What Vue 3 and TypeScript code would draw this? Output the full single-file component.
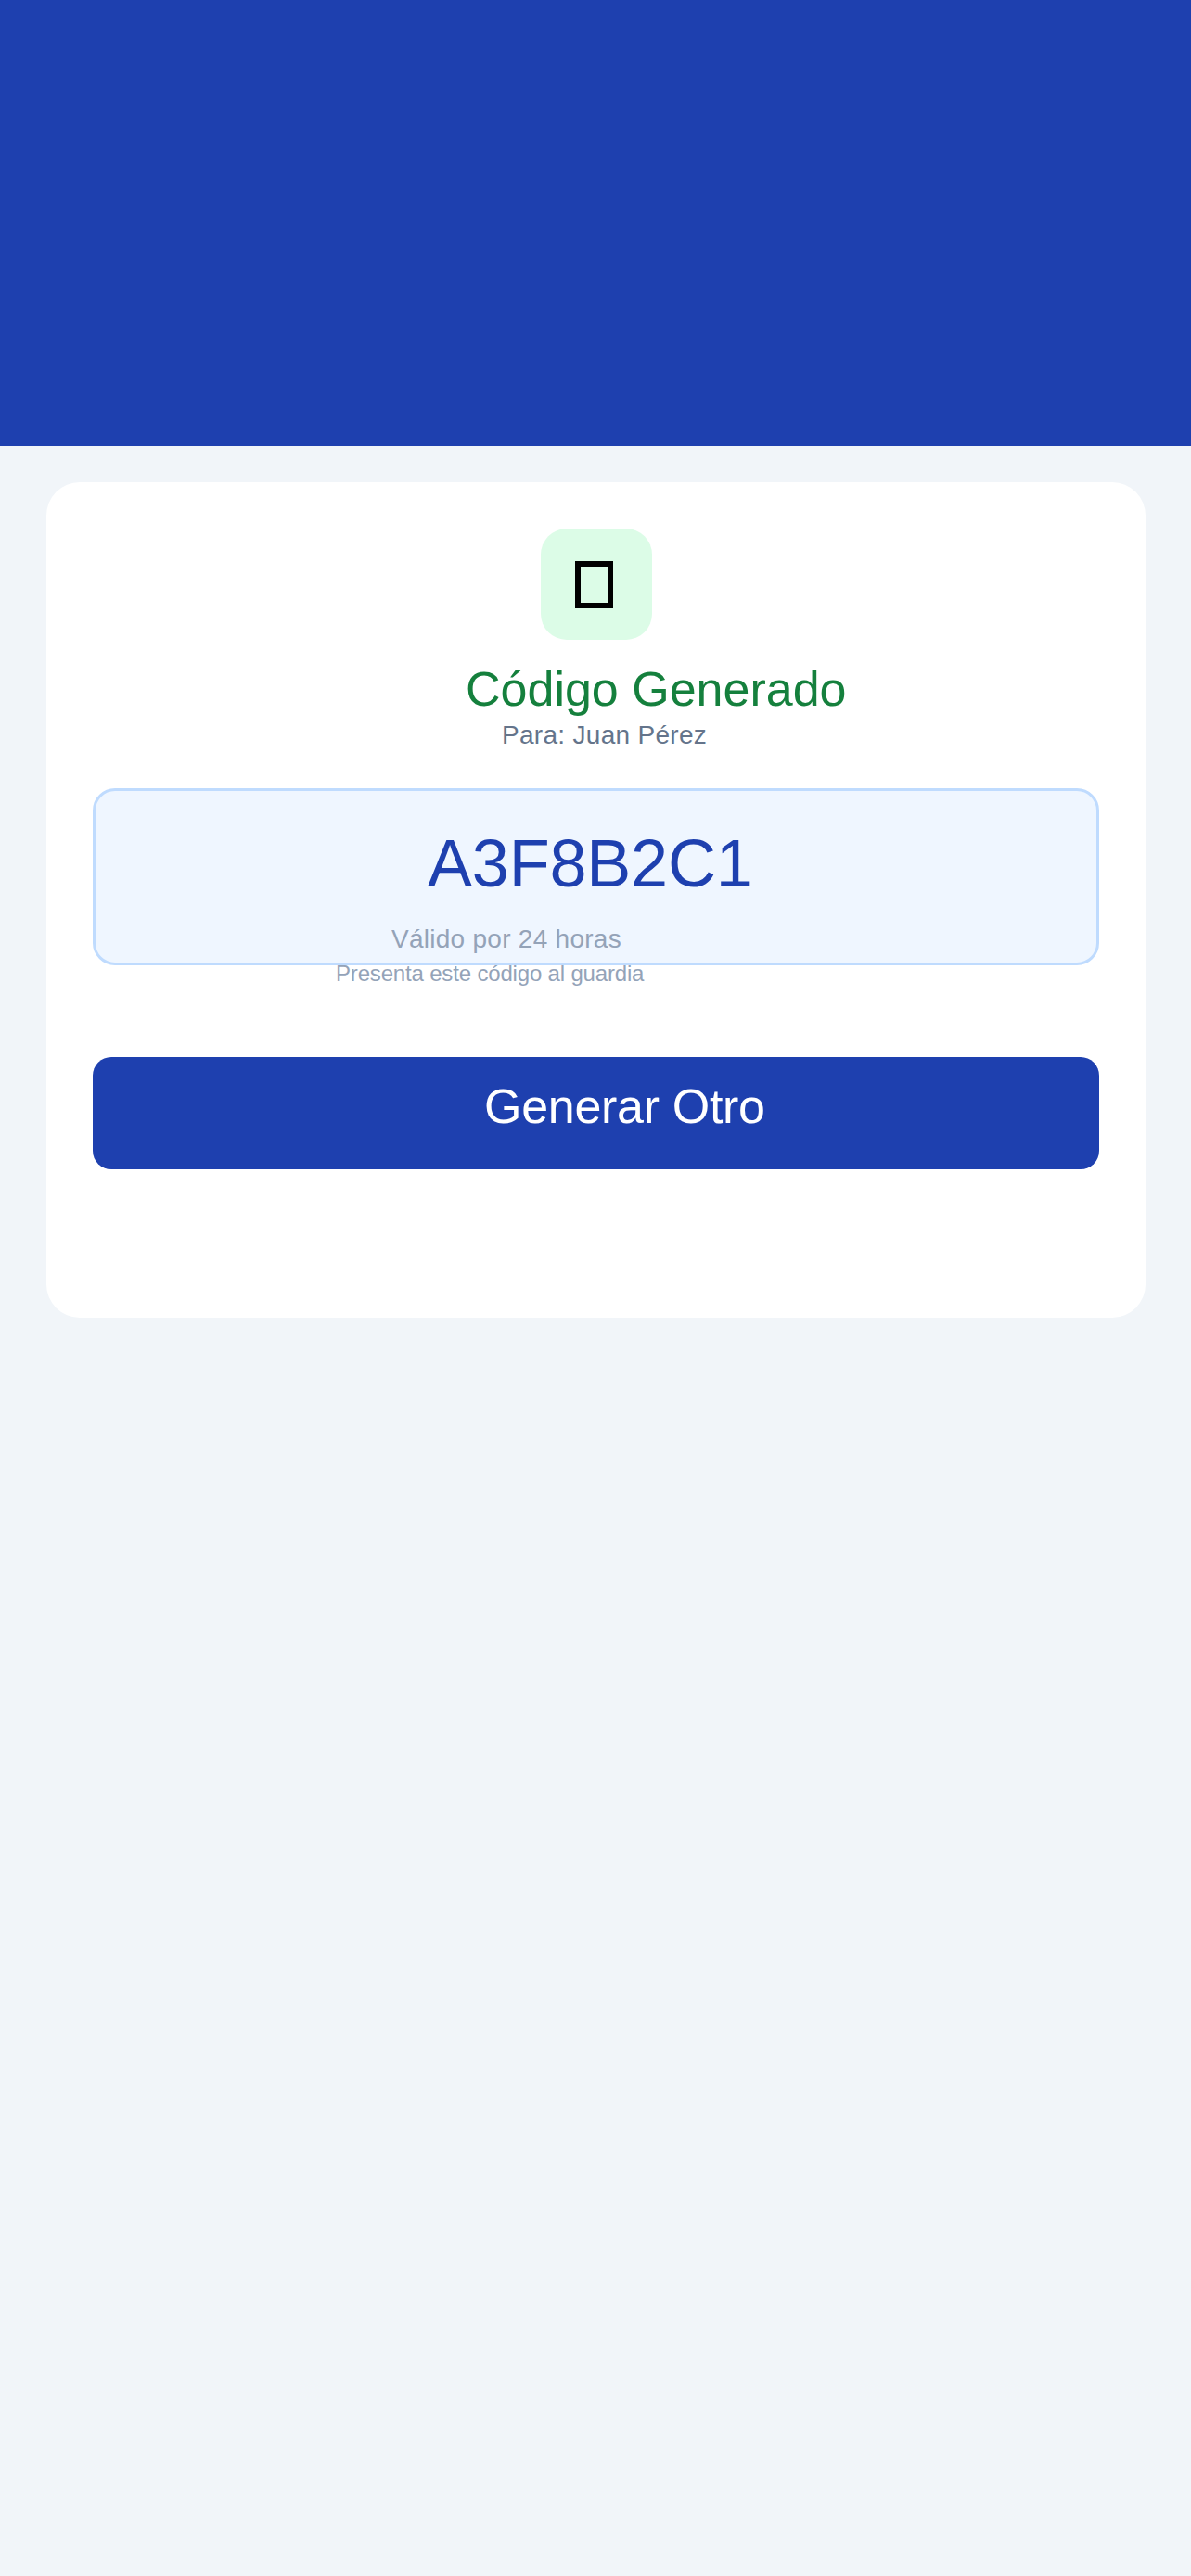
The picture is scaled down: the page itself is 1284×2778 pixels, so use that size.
<script setup lang="ts">
const code: string = 'A3F8B2C1'
</script>

<template>
  <div class="page">
    <header class="hero"></header>
    <main class="main">
      <section class="card">
        <div class="icon"><span class="tofu"></span></div>
        <h1 class="title">Código Generado</h1>
        <p class="recipient">Para: Juan Pérez</p>
        <div class="code-box">
          <div class="code">{{ code }}</div>
          <div class="valid">Válido por 24 horas</div>
          <div class="hint">Presenta este código al guardia</div>
        </div>
        <button class="btn" type="button">Generar Otro</button>
      </section>
    </main>
  </div>
</template>

<style>
html, body { margin: 0; background: #f1f5f9; }
</style>

<style scoped>
.page {
  min-height: 2778px;
  background: #f1f5f9;
  font-family: "Liberation Sans", Arial, sans-serif;
}
.hero { height: 481px; background: #1e40af; }
.main { padding: 39px 49px 0 50px; }
.card {
  height: 901px;
  box-sizing: border-box;
  padding: 50px;
  background: #fff;
  border-radius: 36px;
  display: flex;
  flex-direction: column;
}
.icon {
  width: 120px;
  height: 120px;
  align-self: center;
  border-radius: 28px;
  background: #dcfce7;
  display: flex;
  align-items: center;
  justify-content: center;
}
.tofu {
  width: 41px;
  height: 51px;
  box-sizing: border-box;
  border: 6px solid #000;
  margin: 1px 0 0 -5px;
}
.title {
  margin: 23px 0 0 402px;
  font-size: 52px;
  font-weight: 400;
  line-height: 60px;
  color: #15803d;
  white-space: nowrap;
}
.recipient {
  margin: 4px 0 0 441px;
  font-size: 28px;
  line-height: 32px;
  letter-spacing: 0.3px;
  color: #64748b;
  white-space: nowrap;
}
.code-box {
  height: 191px;
  box-sizing: border-box;
  margin-top: 41px;
  border: 3px solid #bfdbfe;
  border-radius: 24px;
  background: #eff6ff;
}
.code {
  margin: 37px 0 0 358px;
  font-size: 72px;
  line-height: 82px;
  letter-spacing: -0.2px;
  color: #1e40af;
  white-space: nowrap;
}
.valid {
  margin: 25px 0 0 319px;
  font-size: 28px;
  line-height: 32px;
  letter-spacing: 0.27px;
  color: #94a3b8;
  white-space: nowrap;
}
.hint {
  margin: 7px 0 0 259px;
  font-size: 24px;
  line-height: 28px;
  letter-spacing: -0.17px;
  color: #94a3b8;
  white-space: nowrap;
}
.btn {
  height: 121px;
  margin: 99px 0 0;
  padding: 23px 0 0 422px;
  border: 0;
  border-radius: 20px;
  background: #1e40af;
  color: #fff;
  font: inherit;
  font-size: 52px;
  line-height: 60px;
  letter-spacing: -0.3px;
  display: flex;
  align-items: flex-start;
}
</style>
